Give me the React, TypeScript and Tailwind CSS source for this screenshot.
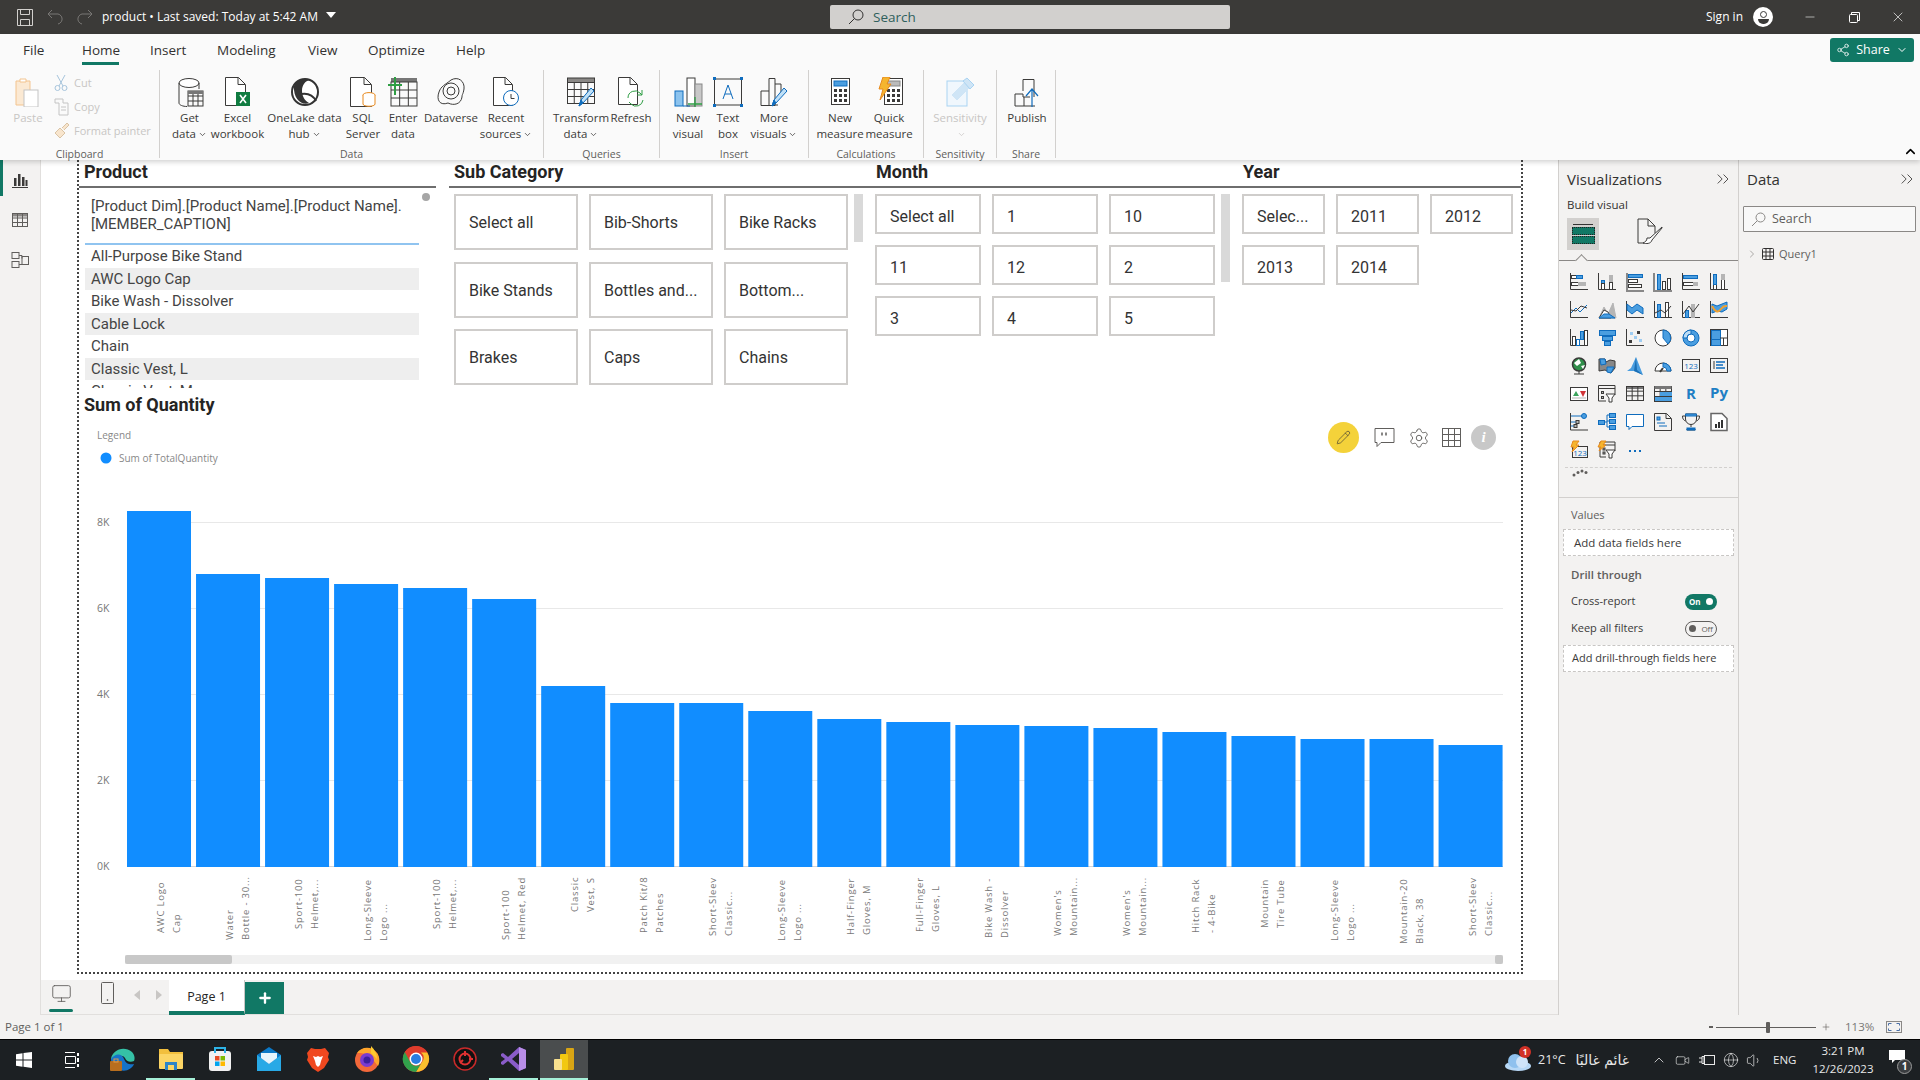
import React from "react";
import { ChevronDown, ChevronRight, ChevronUp, ChevronsRight, Search, X, Minus, Globe, Volume1, Video, Settings, Pencil, Share2, Monitor, Plus } from "lucide-react";

const D = "#3b3a39", B = "#4a9ee0", L = "#0f6cbd", G = "#b5b5b5", O = "#e8891c";

const Ic = ({ s = 30, v = 30, children }: { s?: number; v?: number; children: React.ReactNode }) => (
  <svg width={s} height={s} viewBox={`0 0 ${v} ${v}`} fill="none" stroke={D} strokeWidth={1}>{children}</svg>
);

const Grid = ({ x, y, w, h, cols = 3, rows = 3, c = D }: { x: number; y: number; w: number; h: number; cols?: number; rows?: number; c?: string }) => {
  const p = [];
  for (let i = 1; i < cols; i++) p.push(`M${x + (w * i) / cols} ${y}v${h}`);
  for (let i = 1; i < rows; i++) p.push(`M${x} ${y + (h * i) / rows}h${w}`);
  return <g stroke={c}><rect x={x} y={y} width={w} height={h} /><path d={p.join("")} /></g>;
};
const Pg = ({ x = 5, y = 1, w = 17, h = 27, c = D }: { x?: number; y?: number; w?: number; h?: number; c?: string }) => (
  <path d={`M${x + .5} ${y + .5}h${w - 7}l7 7v${h - 7}h-${w}zM${x + w - 7} ${y + .5}v7h7`} stroke={c} fill="#fff" />
);
const Pen = () => <g><path d="M13 29l2-6L25 11l3 3L17 26z" fill="#bfe0f7" stroke={L} /><path d="M13 29l2-6 2 3z" fill={L} stroke={L} /></g>;
const Calc = ({ x, disp }: { x: number; disp: string }) => (
  <g><rect x={x + .5} y="1.5" width="18" height="26" fill="#fff" />
    <rect x={x + 3} y="4" width="13" height="5" fill={disp} stroke={disp === B ? L : "#888"} />
    {[12, 17, 22].map(y => [3, 8, 13].map(dx => <rect key={y * 100 + dx} x={x + dx} y={y} width="3" height="3" fill={D} stroke="none" />))}</g>
);

const ribbonIcons: Record<string, React.ReactNode> = {
  paste: <Ic><path d="M3 4h14v24H3z" fill="#fbe9d3" stroke="#f3c48f" /><path d="M7 5V2h6v3z" fill="#fff" stroke="#f3c48f" /><rect x="11" y="13" width="14" height="17" fill="#fff" stroke="#c4c4c4" /></Ic>,
  get: <Ic><ellipse cx="14" cy="6" rx="10" ry="4.5" fill="#fff" /><path d="M4 6v20c0 2 4 3.5 8 3.5M24 6v6" /><Grid x={13} y={14} w={15} h={15} cols={3} rows={3} /><rect x="13" y="14" width="15" height="3" fill="#777" stroke="none" /></Ic>,
  excel: <Ic><Pg x={2} y={0} w={20} h={28} /><rect x="13" y="15" width="14" height="14" fill="#107c41" stroke="none" /><path d="M17 18l6 8M23 18l-6 8" stroke="#fff" strokeWidth="1.6" /></Ic>,
  lake: <Ic><circle cx="15" cy="15" r="13" fill="#fff" stroke="#333" strokeWidth="2" /><path d="M4 9c3-6 11-9 16-6-5 1-8 5-8 11 0 5 3 10 7 12-7 3-16-4-15-17z" fill="#333" stroke="none" /><path d="M11 17c6-1 12 1 15 7" stroke="#333" strokeWidth="2" /></Ic>,
  sql: <Ic><Pg x={2} y={0} w={21} h={29} /><ellipse cx="21" cy="18" rx="6" ry="2.4" fill="#fff" stroke={O} /><path d="M15 18v9c0 3 12 3 12 0v-9" fill="#fff" stroke={O} /></Ic>,
  enter: <Ic><rect x="3" y="1" width="26" height="4" fill="#777" stroke="none" /><Grid x={3} y={5} w={26} h={24} cols={3} rows={3} /><path d="M7 0v18M0 8h14" stroke="#2f9e44" strokeWidth="2" /></Ic>,
  dv: <Ic><path d="M15 3c7-4 14 1 13 9-1 6-2 5-2 8-1 7-8 9-14 6C4 29 0 23 3 15 5 9 9 8 15 3z" /><circle cx="15" cy="14" r="8" /><circle cx="15" cy="14" r="4" /></Ic>,
  recent: <Ic><Pg x={2} y={0} w={19} h={28} /><circle cx="20" cy="21" r="7.5" fill="#fff" stroke={L} /><path d="M20 17v4.500h3.500" /></Ic>,
  transform: <Ic><rect x="1.500" y="1" width="27" height="4.500" fill="#8a8886" stroke={D} /><Grid x={1.5} y={5.5} w={27} h={21} cols={4} rows={3} /><Pen /></Ic>,
  refresh: <Ic><Pg x={2} y={0} w={19} h={27} /><path d="M12 21a7 7 0 0 1 12-5l2 2M27 23a7 7 0 0 1-12 4l-2-2" stroke="#2f9e44" fill="none" /><path d="M26 13v5h-5" stroke="#2f9e44" /></Ic>,
  newv: <Ic><rect x="14" y="1" width="8" height="28" fill="#fff" /><rect x="22" y="7" width="7" height="22" fill="#c8c8c8" stroke="#888" /><rect x="2" y="14" width="8" height="15" fill="#8cc3ee" stroke={L} /><path d="M10 29h7" stroke={L} /><path d="M22 20v13M15 27h14" stroke="#2f9e44" strokeWidth="1.300" /></Ic>,
  text: <Ic><rect x="1.500" y="2" width="27" height="26" /><g fill={L} stroke="none"><rect x="0" y="0" width="3" height="3" /><rect x="27" y="0" width="3" height="3" /><rect x="0" y="27" width="3" height="3" /><rect x="27" y="27" width="3" height="3" /></g><path d="M10 22l5-14 5 14M12 17h6" stroke={L} /></Ic>,
  more: <Ic><path d="M10 1.500h6v27H2V14h8zM10 14v14M16 7h6v11" /><path d="M16 28h3" /><Pen /></Ic>,
  newm: <Ic><Calc x={6} disp={B} /></Ic>,
  quick: <Ic><Calc x={10} disp="#bbb" /><path d="M9 0h7l-3 7h4L6 23l3-11H5z" fill="#f5b52e" stroke={O} /></Ic>,
  sens: <Ic><rect x="2" y="4" width="20" height="25" stroke="#a9d3f2" fill="#f0f7fd" /><path d="M7 18l12-12 5 5-12 12z" fill="#cfe5f6" stroke="#cfe5f6" /><path d="M18 4l4-3 7 7-4 4z" fill="#cfe5f6" stroke="#a9d3f2" /></Ic>,
  pub: <Ic><path d="M11 14V2.500h11V20M3 29V17h8v3h7M3 29h20M12 29V20" /><path d="M20 30V12M14 19l6-7 6 7" stroke={L} strokeWidth="1.200" /></Ic>,
};

const Tool = ({ w, icon, lines, drop, dim }: { w: string; icon: string; lines: string[]; drop?: boolean; dim?: boolean }) => (
  <div className={`${w} flex flex-col items-center pt-[7px] shrink-0`}>
    <div className="h-[30px]">{ribbonIcons[icon]}</div>
    <div className={`mt-[3px] text-center text-[11.500px] leading-[16px] whitespace-nowrap ${dim ? "text-[#c8c6c4]" : "text-[#3b3a39]"}`}>
      {lines.map((l, i) => (
        <div key={i} className="flex items-center justify-center h-[16px]">
          {l}{drop && i === lines.length - 1 && <ChevronDown size={9} strokeWidth={2} className="ml-[2px]" />}
        </div>
      ))}
    </div>
  </div>
);

const Group = ({ w, label, children, pad }: { w: string; label: string; children: React.ReactNode; pad: string }) => (
  <div className={`${w} h-[88px] relative border-r border-[#d2d0ce] shrink-0`}>
    <div className={`flex ${pad}`}>{children}</div>
    <div className="absolute bottom-[-3px] inset-x-0 text-center text-[10.500px] leading-[14px] text-[#605e5c]">{label}</div>
  </div>
);

const Ribbon = () => (
  <div className="h-[126px] bg-[#fafafa] shadow-[0_2px_5px_rgba(0,0,0,0.18)] relative z-10">
    <div className="h-[36px] flex pl-[23px] text-[13.500px] text-[#323130] relative">
      <div className="w-[59px] pt-[6px]">File</div>
      <div className="w-[68px] pt-[6px] font-medium relative">Home<div className="absolute left-0 top-[28px] h-[3px] w-[37px] bg-[#117865]" /></div>
      <div className="w-[67px] pt-[6px]">Insert</div>
      <div className="w-[91px] pt-[6px]">Modeling</div>
      <div className="w-[60px] pt-[6px]">View</div>
      <div className="w-[88px] pt-[6px]">Optimize</div>
      <div className="pt-[6px]">Help</div>
      <div className="ml-auto mr-[6px] mt-[4px] w-[84px] h-[24px] rounded-[3px] bg-[#117865] text-white text-[12.500px] flex items-center justify-center gap-[6px]">
        <Share2 size={14} strokeWidth={1.300} />Share<ChevronDown size={12} />
      </div>
    </div>
    <div className="flex h-[90px]">
      <Group w="w-[160px]" label="Clipboard" pad="">
        <Tool w="w-[50px] ml-[3px]" icon="paste" lines={["Paste"]} dim />
        <div className="text-[11px] text-[#c8c6c4] pt-[1px] leading-[24px] ml-[1px]">
          <div className="flex items-center gap-[6px]"><svg width="14" height="18" viewBox="0 0 14 18" fill="none" stroke="#a6c4dc"><path d="M3 1l6 11M11 1L5 12" /><circle cx="3.500" cy="14" r="2.500" /><circle cx="10.500" cy="14" r="2.500" /></svg>Cut</div>
          <div className="flex items-center gap-[4px]"><svg width="16" height="18" viewBox="0 0 16 18" fill="none" stroke="#c4c4c4"><path d="M1 1h8v4h5v12H5V5H1z" /><path d="M7 9h5M7 12h5" /></svg>Copy</div>
          <div className="flex items-center gap-[4px]"><svg width="16" height="18" viewBox="0 0 16 18" fill="none" stroke="#d9c3a5"><path d="M1 11l5-5 5 5-5 5zM8 6l5-5 2 2-5 5" fill="#f8e5cd" /></svg>Format painter</div>
        </div>
      </Group>
      <Group w="w-[384px]" label="Data" pad="pl-[6px]">
        <Tool w="w-[47px]" icon="get" lines={["Get", "data"]} drop />
        <Tool w="w-[49px]" icon="excel" lines={["Excel", "workbook"]} />
        <Tool w="w-[85px]" icon="lake" lines={["OneLake data", "hub"]} drop />
        <Tool w="w-[32px]" icon="sql" lines={["SQL", "Server"]} />
        <Tool w="w-[48px]" icon="enter" lines={["Enter", "data"]} />
        <Tool w="w-[48px]" icon="dv" lines={["Dataverse"]} />
        <Tool w="w-[62px]" icon="recent" lines={["Recent", "sources"]} drop />
      </Group>
      <Group w="w-[116px]" label="Queries" pad="pl-[6px]">
        <Tool w="w-[62px]" icon="transform" lines={["Transform", "data"]} drop />
        <Tool w="w-[38px]" icon="refresh" lines={["Refresh"]} />
      </Group>
      <Group w="w-[149px]" label="Insert" pad="pl-[6px]">
        <Tool w="w-[44px]" icon="newv" lines={["New", "visual"]} />
        <Tool w="w-[36px]" icon="text" lines={["Text", "box"]} />
        <Tool w="w-[56px]" icon="more" lines={["More", "visuals"]} drop />
      </Group>
      <Group w="w-[115px]" label="Calculations" pad="pl-[6px]">
        <Tool w="w-[50px]" icon="newm" lines={["New", "measure"]} />
        <Tool w="w-[48px]" icon="quick" lines={["Quick", "measure"]} />
      </Group>
      <Group w="w-[73px]" label="Sensitivity" pad="">
        <Tool w="w-[72px]" icon="sens" lines={["Sensitivity", ""]} drop dim />
      </Group>
      <Group w="w-[59px]" label="Share" pad="">
        <Tool w="w-[60px]" icon="pub" lines={["Publish"]} />
      </Group>
      <div className="ml-auto mr-[2px] mt-[74px]"><ChevronUp size={15} strokeWidth={2.500} /></div>
    </div>
  </div>
);

const TitleBar = () => (
  <div className="h-[34px] bg-[#3b3a38] flex items-center text-white shrink-0">
    <div className="w-[830px] flex items-center pl-[17px]">
      <svg width="16" height="17" viewBox="0 0 16 17" fill="none" stroke="#d2d0ce"><path d="M.500.500h15v16H.500z" /><path d="M3.500.500v5h9v-5M3.500 16.500v-6h9v6" /></svg>
      <svg className="ml-[14px]" width="16" height="16" viewBox="0 0 16 16" fill="none" stroke="#797775"><path d="M5 1L1 5l4 4M1 5h8a5 5 0 0 1 2 10" /></svg>
      <svg className="ml-[14px]" width="16" height="16" viewBox="0 0 16 16" fill="none" stroke="#797775"><path d="M11 1l4 4-4 4M15 5H7a5 5 0 0 0-2 10" /></svg>
      <div className="ml-[9px] text-[12px] whitespace-nowrap">product • Last saved: Today at 5:42 AM</div>
      <svg className="ml-[8px] mb-[4px]" width="10" height="6" viewBox="0 0 10 6"><path d="M0 0h10L5 6z" fill="#fff" /></svg>
    </div>
    <div className="w-[400px] h-[24px] bg-[#d2d0ce] rounded-[2px] flex items-center pl-[18px] text-[13.500px] text-[#2f5f5c]">
      <svg width="16" height="16" viewBox="0 0 16 16" fill="none" stroke="#323130"><circle cx="10" cy="6" r="5" /><path d="M6.500 9.500L1 15" /></svg>
      <span className="ml-[9px]">Search</span>
    </div>
    <div className="ml-auto flex items-center">
      <span className="text-[12px]">Sign in</span>
      <div className="ml-[10px] w-[20px] h-[20px] rounded-full bg-white flex flex-col items-center justify-center">
        <div className="w-[7px] h-[7px] rounded-full border border-[#3b3a38]" />
        <div className="mt-[1px] w-[11px] h-[5px] rounded-b-full bg-[#3b3a38]" />
      </div>
      <div className="w-[44px] ml-[15px] flex justify-center"><Minus size={14} strokeWidth={1} /></div>
      <div className="w-[44px] flex justify-center">
        <svg width="11" height="11" viewBox="0 0 11 11" fill="none" stroke="#fff"><rect x=".500" y="2.500" width="8" height="8" rx="1" /><path d="M2.500 2.500v-2h8v8h-2" /></svg>
      </div>
      <div className="w-[44px] flex justify-center"><X size={16} strokeWidth={1} /></div>
    </div>
  </div>
);

const Rail = () => (
  <div className="w-[41px] shrink-0 bg-[#f3f2f1] border-r border-[#e1dfdd] relative flex flex-col items-center gap-[22px] pt-[11px]">
    <div className="absolute left-0 top-0 w-[3px] h-[36px] bg-[#117865]" />
    <svg width="18" height="18" viewBox="0 0 18 18" fill={D} stroke="none"><path d="M1 16h16v1H1z" /><rect x="3" y="7" width="2.500" height="8" /><rect x="7" y="3" width="2.500" height="12" /><rect x="11" y="6" width="2.500" height="9" /><rect x="14.500" y="9" width="2" height="6" /></svg>
    <svg width="18" height="18" viewBox="0 0 18 18"><rect x="1" y="2" width="16" height="3.500" fill="#8a8886" /><g fill="none" stroke="#605e5c"><rect x="1.500" y="2.500" width="15" height="13" /><path d="M6.500 2.500v13M11.500 2.500v13M1.500 7h15M1.500 11.500h15" /></g></svg>
    <svg width="18" height="18" viewBox="0 0 18 18" fill="none" stroke="#605e5c"><rect x="1" y="1.500" width="7" height="6" /><rect x="1" y="10.500" width="7" height="6" /><rect x="11" y="5.500" width="6.500" height="8" /><path d="M8 4.500h3v3M8 13.500h3" /></svg>
  </div>
);

const Head = ({ children, x }: { children: React.ReactNode; x: string }) => (
  <div className={`h-[28px] border-b-2 border-[#6e6e6e] text-[18px] leading-[24px] font-bold text-[#252423] ${x}`}>{children}</div>
);

const Chip = ({ t, h, w, pt }: { t: string; h: string; w: string; pt: string }) => (
  <div className={`${h} ${w} ${pt} border-2 border-[#cfcdcb] flex items-center pl-[13px] text-[16px] text-[#333] whitespace-nowrap overflow-hidden`}>{t}</div>
);

const Slicers = () => (
  <div className="h-[228px] flex font-['Roboto',sans-serif] shrink-0">
    <div className="w-[357px]">
      <Head x="pl-[5px]">Product</Head>
      <div className="relative pl-[6px] text-[15px] text-[#444]">
        <div className="absolute right-[6px] top-[5px] w-[8px] h-[8px] rounded-full bg-[#a6a6a6]" />
        <div className="w-[334px] h-[57px] border-b-2 border-[#90c4f0] pl-[6px] pt-[9px] leading-[18px]">[Product Dim].[Product Name].[Product Name].<br />[MEMBER_CAPTION]</div>
        <div className="w-[334px] h-[143px] overflow-hidden leading-[22.500px]">
          {["All-Purpose Bike Stand", "AWC Logo Cap", "Bike Wash - Dissolver", "Cable Lock", "Chain", "Classic Vest, L", "Classic Vest, M"].map((t, i) => (
            <div key={t} className={`h-[22.500px] pl-[6px] ${i % 2 ? "bg-[#eeeeee]" : "bg-white"}`}>{t}</div>
          ))}
        </div>
      </div>
    </div>
    <div className="w-[13px]" />
    <div className="w-[420px]">
      <Head x="pl-[5px]">Sub Category</Head>
      <div className="flex pl-[5px] pt-[6px]">
        <div className="grid grid-cols-[124px_124px_124px] gap-x-[11px] gap-y-[11.500px]">
          {["Select all", "Bib-Shorts", "Bike Racks", "Bike Stands", "Bottles and...", "Bottom...", "Brakes", "Caps", "Chains"].map(t => <Chip key={t} t={t} h="h-[56px]" w="w-[124px]" pt="pt-[2px]" />)}
        </div>
        <div className="ml-[6px] w-[9px] h-[48px] bg-[#d9d9d9]" />
      </div>
    </div>
    <div className="w-[367px]">
      <Head x="pl-[7px]">Month</Head>
      <div className="flex pl-[6px] pt-[6px]">
        <div className="grid grid-cols-[106px_106px_106px] gap-x-[11px] gap-y-[11px] h-[141px]">
          {["Select all", "1", "10", "11", "12", "2", "3", "4", "5"].map(t => <Chip key={t} t={t} h="h-[40px]" w="w-[106px]" pt="pt-[6px]" />)}
        </div>
        <div className="ml-[6px] w-[9px] h-[88px] bg-[#d9d9d9]" />
      </div>
    </div>
    <div className="w-[285px]">
      <Head x="pl-[7px]">Year</Head>
      <div className="pl-[6px] pt-[6px]">
        <div className="grid grid-cols-[83px_83px_83px] gap-x-[11px] gap-y-[11px]">
          {["Selec...", "2011", "2012", "2013", "2014"].map(t => <Chip key={t} t={t} h="h-[40px]" w="w-[83px]" pt="pt-[6px]" />)}
        </div>
      </div>
    </div>
  </div>
);

const data: { top: number; low: number; a: string; b: string }[] = [
  { top: 511, low: 933, a: "AWC Logo", b: "Cap" },
  { top: 574, low: 940, a: "Water", b: "Bottle - 30..." },
  { top: 578, low: 929, a: "Sport-100", b: "Helmet,..." },
  { top: 584, low: 941, a: "Long-Sleeve", b: "Logo ..." },
  { top: 588, low: 929, a: "Sport-100", b: "Helmet,..." },
  { top: 599, low: 940, a: "Sport-100", b: "Helmet, Red" },
  { top: 686, low: 912, a: "Classic", b: "Vest, S" },
  { top: 703, low: 933, a: "Patch Kit/8", b: "Patches" },
  { top: 703, low: 936, a: "Short-Sleev", b: "Classic..." },
  { top: 711, low: 941, a: "Long-Sleeve", b: "Logo ..." },
  { top: 719, low: 935, a: "Half-Finger", b: "Gloves, M" },
  { top: 722, low: 932, a: "Full-Finger", b: "Gloves, L" },
  { top: 725, low: 938, a: "Bike Wash -", b: "Dissolver" },
  { top: 726, low: 936, a: "Women's", b: "Mountain..." },
  { top: 728, low: 936, a: "Women's", b: "Mountain..." },
  { top: 732, low: 933, a: "Hitch Rack", b: "- 4-Bike" },
  { top: 736, low: 928, a: "Mountain", b: "Tire Tube" },
  { top: 739, low: 941, a: "Long-Sleeve", b: "Logo ..." },
  { top: 739, low: 944, a: "Mountain-20", b: "Black, 38" },
  { top: 745, low: 936, a: "Short-Sleev", b: "Classic..." },
];

const Chart = () => (
  <svg width="1442" height="552" viewBox="79 420 1442 552" className="block" fontFamily="'Open Sans',sans-serif">
    <text x="97" y="439" fontSize="10" fill="#888">Legend</text>
    <circle cx="106" cy="458" r="5.500" fill="#118dff" />
    <text x="119" y="462" fontSize="10" fill="#888">Sum of TotalQuantity</text>
    {[["8K", 522], ["6K", 608], ["4K", 694], ["2K", 780], ["0K", 866]].map(([t, y]) => (
      <g key={t as string}>
        <text x="97" y={(y as number) + 4} fontSize="10.500" fill="#777">{t}</text>
        <path d={`M127 ${y}.5H1503`} stroke={t === "0K" ? "#d5d5d5" : "#e8e8e8"} />
      </g>
    ))}
    {data.map((d, i) => {
      const cx = 159 + 69.03 * i;
      return (
        <g key={i}>
          <rect x={cx - 32} y={d.top} width="64" height={867 - d.top} fill="#118dff" />
          <text transform={`translate(${cx + 5} ${d.low}) rotate(-90)`} fontSize="9.500" letterSpacing=".8" fill="#777">{d.a}</text>
          <text transform={`translate(${cx + 21} ${d.low}) rotate(-90)`} fontSize="9.500" letterSpacing=".8" fill="#777">{d.b}</text>
        </g>
      );
    })}
    <rect x="125" y="955" width="1378" height="9" fill="#f1f1f1" />
    <rect x="125" y="955" width="107" height="9" rx="2" fill="#c8c8c8" />
    <rect x="1495" y="955" width="8" height="9" rx="2" fill="#c8c8c8" />
  </svg>
);

const Report = () => (
  <div className="ml-[36px] w-[1446px] h-[814px] border-x-2 border-b-2 border-dotted border-[#444] flex flex-col relative">
    <Slicers />
    <div className="h-[32px] pl-[5px] pt-[3px] text-[18px] leading-[28px] font-bold text-[#252423] font-['Roboto',sans-serif] shrink-0">Sum of Quantity</div>
    <Chart />
    <div className="absolute left-[1249px] top-[262px] flex items-center text-[#605e5c]">
      <div className="w-[31px] h-[31px] rounded-full bg-[#f4d23a] flex items-center justify-center"><Pencil size={15} strokeWidth={1} color="#333" /></div>
      <svg className="ml-[15px]" width="21" height="21" viewBox="0 0 21 21" fill="none" stroke="#605e5c"><path d="M1 1.500h19v14H7l-4 4v-4H1z" /><path d="M8 5.500v3M12 5.500v3" strokeWidth="1.500" /></svg>
      <Settings className="ml-[13px]" size={22} strokeWidth={1} />
      <svg className="ml-[12px]" width="19" height="19" viewBox="0 0 19 19" fill="none" stroke="#605e5c"><rect x=".500" y=".500" width="18" height="18" /><path d="M6.500.500v18M12.500.500v18M.500 6.500h18M.500 12.500h18" /></svg>
      <div className="ml-[10px] w-[25px] h-[25px] rounded-full bg-[#c8c8c8] flex items-center justify-center text-white font-bold italic text-[15px] font-['Liberation_Serif',serif]">i</div>
    </div>
  </div>
);

const Tabs = () => (
  <div className="h-[35px] bg-[#f3f2f1] flex items-start shrink-0 border-b border-[#e1dfdd]">
    <div className="w-[42px] flex flex-col items-center pt-[3px] ml-[-1px] text-[#605e5c]">
      <Monitor size={21} strokeWidth={1} />
      <div className="w-[24px] h-[3px] rounded bg-[#117865] mt-[5px]" />
    </div>
    <div className="w-[50px] flex justify-center pt-[2px]">
      <svg width="13" height="22" viewBox="0 0 13 22" fill="none" stroke="#605e5c"><rect x=".500" y=".500" width="12" height="21" rx="1" /><circle cx="6.500" cy="18" r=".5" /></svg>
    </div>
    <div className="flex items-center gap-[16px] h-[30px] ml-[2px] w-[34px]">
      <svg width="6" height="10" viewBox="0 0 6 10"><path d="M6 0v10L0 5z" fill="#c8c6c4" /></svg>
      <svg width="6" height="10" viewBox="0 0 6 10"><path d="M0 0v10l6-5z" fill="#c8c6c4" /></svg>
    </div>
    <div className="ml-[1px] w-[76px] h-[35px] bg-white border-b-4 border-[#117865] border-r border-r-[#c8c6c4] flex items-center justify-center pt-[3px] text-[12.500px] text-[#252423]">Page 1</div>
    <div className="mt-[2px] w-[39px] h-[32px] bg-[#117865] flex items-center justify-center"><Plus size={16} strokeWidth={3.500} color="#fff" /></div>
  </div>
);

const VI = ({ children }: { children: React.ReactNode }) => (
  <svg width="18" height="18" viewBox="0 0 18 18" fill="none" stroke={D} strokeWidth="1" overflow="visible">{children}</svg>
);
const Ax = () => <path d="M.500 0v16.500H18" />;
const Bx = ({ x, y, w, h, f = B, s = L }: { x: number; y: number; w: number; h: number; f?: string; s?: string }) => <rect x={x + .5} y={y + .5} width={w} height={h} fill={f} stroke={s} />;

const vizIcons: React.ReactNode[] = [
  <><Ax /><Bx x={1} y={2} w={8} h={3} f="#fff" s={D} /><Bx x={6} y={2} w={6} h={3} /><Bx x={1} y={9} w={9} h={3} f="#fff" s={D} /><Bx x={8} y={9} w={7} h={3} f={G} s={G} /></>,
  <><Ax /><Bx x={3} y={7} w={3} h={9} /><Bx x={3} y={10} w={3} h={6} f="#fff" s={D} /><Bx x={11} y={2} w={3} h={14} f={G} s={G} /><Bx x={11} y={9} w={3} h={7} f="#fff" s={D} /></>,
  <><path d="M1 0v18h17" stroke="#888" strokeWidth="2" /><Bx x={2} y={1} w={14} h={3} /><Bx x={2} y={6} w={9} h={3} f="#fff" s={D} /><Bx x={2} y={11} w={13} h={3} f="#fff" s={D} /></>,
  <><path d="M0 0v18h18" stroke="#888" strokeWidth="2" /><Bx x={3} y={1} w={3} h={15} /><Bx x={8} y={8} w={3} h={8} f="#fff" s={D} /><Bx x={13} y={5} w={3} h={11} f="#fff" s={D} /></>,
  <><Ax /><Bx x={1} y={2} w={14} h={3} /><Bx x={1} y={9} w={10} h={3} f="#fff" s={D} /><Bx x={11} y={9} w={4} h={3} f={G} s={G} /></>,
  <><Ax /><Bx x={3} y={1} w={3} h={15} f="#fff" s={D} /><Bx x={3} y={1} w={3} h={10} /><Bx x={11} y={1} w={3} h={15} f="#fff" s={D} /><Bx x={11} y={1} w={3} h={5} f={G} s={G} /></>,
  <><Ax /><path d="M1 12l5-5 4 4 7-7" stroke={L} /><path d="M1 9l5 1 5-5 6 2" /></>,
  <><path d="M1 17l5-11 4 7 5-11 3 15z" fill={G} stroke={G} /><path d="M1 17l5-8 4 2 3 6z" fill="#fff" /><path d="M1 17l5-4 5 0 6 4z" fill={B} stroke={L} /></>,
  <><Ax /><path d="M1 3l5 4 5-4 6 4v6l-6-4-5 4-5-4z" fill={B} stroke={L} /></>,
  <><Ax /><Bx x={3} y={3} w={3} h={13} /><Bx x={11} y={1} w={3} h={15} f="#fff" s={D} /><path d="M1 12l6-3 4 3 6-7" /></>,
  <><Ax /><Bx x={3} y={9} w={3} h={7} /><Bx x={9} y={3} w={3} h={13} f={G} s={G} /><path d="M1 13l6-8 4 6 6-8" /></>,
  <><Ax /><path d="M2 3l5 2 5-2 5-2v7l-5 3-5-1-5 2z" fill={B} stroke={L} /><path d="M2 5c3 6 6 7 9 3s4-3 6-3" stroke="#f0a030" strokeWidth="2" /></>,
  <><Ax /><Bx x={2} y={7} w={3} h={9} f="#fff" s={D} /><Bx x={6} y={10} w={3} h={6} f="#fff" s={L} /><Bx x={10} y={2} w={3} h={8} /><Bx x={14} y={1} w={3} h={15} f="#fff" s={D} /></>,
  <><Bx x={1} y={1} w={16} h={5} /><Bx x={4} y={7} w={10} h={4} /><Bx x={6} y={12} w={6} h={4} /></>,
  <><Ax /><g stroke="none"><rect x="4" y="3" width="3" height="3" fill="#9fcdf2" /><rect x="11" y="2" width="3" height="3" fill={D} /><rect x="8" y="7" width="3" height="3" fill="#9fcdf2" /><rect x="3" y="11" width="3" height="3" fill={D} /><rect x="13" y="10" width="3" height="3" fill="#9fcdf2" /></g></>,
  <><circle cx="9" cy="9" r="8" fill="#fff" /><path d="M9 1a8 8 0 0 1 5 14L9 9z" fill={B} stroke={L} /></>,
  <><circle cx="9" cy="9" r="8" fill={B} stroke={L} /><circle cx="9" cy="9" r="4" fill="#fff" stroke={L} /><path d="M9 1a8 8 0 0 0-8 8h4a4 4 0 0 1 4-4z" fill="#bcdcf5" stroke={L} /></>,
  <><rect x=".500" y=".500" width="17" height="16" fill="#fff" /><Bx x={1} y={1} w={9} h={9} /><Bx x={1} y={10} w={9} h={6} /><path d="M10 9h7M13.500 9v8" /></>,
  <><circle cx="9" cy="7.500" r="6.500" fill="#2f8f4a" stroke={D} strokeWidth="1.500" /><path d="M4 6l5-4 2 4-4 3zM11 9l4-1-2 4z" fill="#fff" stroke="none" /><path d="M9 14v3M4 17h10" /></>,
  <><path d="M1 2l6 0 1 3 4-2 5 1 0 7-4 5-6-3-6 1z" fill="#888" stroke={D} /><path d="M2 2h5l1 5-5 1z" fill={B} stroke={L} /><path d="M9 10h7l-3 6-4-1z" fill={B} stroke={L} /></>,
  <><path d="M10 0L5 11 1 14l7 0 9 4z" fill={B} stroke="none" /><path d="M10 0l1 13 6 5-9-4z" fill="#1b6fb5" stroke="none" /></>,
  <><path d="M1 14a8 8 0 0 1 16 0z" fill="#fff" /><path d="M9 6a8 8 0 0 1 8 8h-4a4 4 0 0 0-4-4z" fill={B} stroke={L} /><path d="M6 15l3-4" strokeWidth="2" /></>,
  <><rect x=".500" y="2.500" width="17" height="12" /><text x="9" y="12" fontSize="8" textAnchor="middle" fill={L} stroke="none" fontFamily="'Open Sans',sans-serif">123</text></>,
  <><rect x=".500" y="1.500" width="17" height="14" /><path d="M4 4v8" /><path d="M6 5h9M6 8h7M6 11h9" stroke={L} strokeWidth="1.500" /></>,
  <><rect x=".500" y="2.500" width="17" height="13" fill="#fff" /><path d="M3 11l3-5 3 5z" fill="#3aa35c" stroke="none" /><path d="M10 6h6l-3 6z" fill="#d13438" stroke="none" /><path d="M2 13h14" stroke={G} /></>,
  <><path d="M17 10V.500H.500V16H8M.500 3.500H17" /><Bx x={3} y={6} w={2} h={2} f={G} s={D} /><Bx x={3} y={11} w={2} h={2} f={G} s={D} /><path d="M8 9h9l-3 4v4h-3v-4z" fill="#fff" /></>,
  <><rect x=".500" y="1" width="17" height="3" fill="#777" stroke="none" /><Grid x={0.5} y={1.5} w={17} h={14} cols={3} rows={3} /></>,
  <><Grid x={0.5} y={1.5} w={17} h={15} cols={3} rows={3} /><rect x=".500" y="1" width="17" height="3" fill="#777" stroke="none" /><g fill={B} stroke="none"><rect x="6" y="7" width="12" height="4" /><rect x="1" y="12" width="17" height="4" /></g></>,
  <text x="9" y="14" fontSize="15" fontWeight="700" textAnchor="middle" fill="#1f7fc4" stroke="none" fontFamily="'Open Sans',sans-serif">R</text>,
  <text x="9" y="13" fontSize="15" fontWeight="700" textAnchor="middle" fill="#1f7fc4" stroke="none" fontFamily="'Open Sans',sans-serif">Py</text>,
  <><path d="M.500 0v17H18" /><path d="M1 3h11M1 9h7M1 13h4" stroke={L} /><circle cx="14" cy="3" r="2.500" fill={B} stroke={L} /><rect x="6" y="7.500" width="3" height="3" fill={G} stroke={D} /><rect x="4" y="11.500" width="3" height="3" fill={G} stroke={D} /></>,
  <><Bx x={0} y={7} w={6} h={4} /><Bx x={11} y={0} w={6} h={4} /><Bx x={11} y={6} w={6} h={4} /><Bx x={11} y={12} w={6} h={4} /><path d="M6 9h3M9 2v12M9 2h2M9 8h2M9 14h2" stroke={L} /></>,
  <path d="M.500 1.500h17v12H6l-3 3v-3H.500z" stroke={L} fill="#fff" />,
  <><path d="M.500.500h12l5 5v12H.500zM12 .500v5h5" /><rect x="3" y="4" width="3" height="3" fill={B} stroke={L} /><path d="M3 10h8M5 13h8" stroke={L} /></>,
  <><path d="M3.500 1h11v5a5.500 5.500 0 0 1-11 0zM9 11v3M5 16h8v1H5z" /><path d="M3.500 1h11v2h-11z" fill={B} stroke={L} /><path d="M3.500 3H.500c0 3 1 4 3 5M14.500 3h3c0 3-1 4-3 5" /><rect x="5" y="15" width="8" height="2" fill={L} stroke={L} /></>,
  <><path d="M1 .500h11l5 5v12H1z" fill="#fff" stroke="#666" strokeWidth="1.500" /><g fill="#333" stroke="none"><rect x="5" y="11" width="2" height="4" /><rect x="8" y="9" width="2" height="6" /><rect x="11" y="7" width="2" height="8" /></g></>,
  <><rect x="2.500" y="5.500" width="15" height="11" /><text x="10" y="14.500" fontSize="8" textAnchor="middle" fill={L} stroke="none" fontFamily="'Open Sans',sans-serif">123</text><path d="M3 0h6L6 4h3L2 11l2-5H1z" fill="#f5b52e" stroke={O} /></>,
  <><path d="M17 10V1H2v15h6M2 4h15" /><rect x="5" y="7" width="2" height="2" fill={G} stroke={D} /><rect x="5" y="11" width="2" height="2" fill={G} stroke={D} /><path d="M8 9h9l-3 4v4h-3v-4z" fill="#fff" /><path d="M3 0h5L5 4h3L1 10l2-4H0z" fill="#f5b52e" stroke={O} /></>,
  <g fill={L} stroke="none"><rect x="3" y="9" width="2" height="2" /><rect x="8" y="9" width="2" height="2" /><rect x="13" y="9" width="2" height="2" /></g>,
];

const Toggle = ({ on }: { on?: boolean }) => on ? (
  <div className="w-[32px] h-[16px] rounded-full bg-[#117865] flex items-center justify-between px-[4px] text-white text-[8px] font-bold"><span>On</span><span className="w-[7px] h-[7px] rounded-full bg-white" /></div>
) : (
  <div className="w-[32px] h-[16px] rounded-full border border-[#605e5c] flex items-center justify-between px-[3px] text-[#605e5c] text-[8px]"><span className="w-[7px] h-[7px] rounded-full bg-[#605e5c]" /><span>Off</span></div>
);

const Viz = () => (
  <div className="w-[181px] shrink-0 bg-[#f3f2f1] border-r border-[#d2d0ce] border-l flex flex-col text-[#323130]">
    <div className="h-[37px] flex items-center pl-[8px] pr-[5px] justify-between pt-[1px]">
      <span className="text-[15px] font-medium">Visualizations</span><ChevronsRight size={20} strokeWidth={1} />
    </div>
    <div className="pl-[8px] text-[11.500px] font-medium leading-[16px] h-[21px]">Build visual</div>
    <div className="h-[43px] relative border-b border-[#8a8886] pl-[8px] flex items-start">
      <div className="w-[32px] h-[32px] bg-[#d2d0ce] flex flex-col items-center justify-center gap-[1px]">
        <div className="w-[20px] h-[1px] bg-[#333] mb-[1px]" />
        <div className="w-[23px] h-[8px] bg-[#117865] border border-dotted border-[#222]" />
        <div className="w-[23px] h-[8px] bg-[#117865] border border-dotted border-[#222]" />
      </div>
      <svg className="ml-[38px]" width="26" height="26" viewBox="0 0 26 26" fill="none" stroke={D}><path d="M1 25V1h10l7 7v7M11 1v7h7M1 25h6" /><path d="M25 9L13 20l-3 0c0 3-2 4-4 5 3 1 8 1 9-3L25 10z" fill="#fff" /></svg>
      <div className="absolute left-[18px] bottom-[-5px] w-[9px] h-[9px] rotate-45 bg-[#f3f2f1] border-l border-t border-[#8a8886]" />
    </div>
    <div className="grid grid-cols-[repeat(6,28px)] auto-rows-[28px] pl-[6px] pt-[7px] h-[206px] content-start items-center justify-items-center">
      {vizIcons.map((ic, i) => <VI key={i}>{ic}</VI>)}
    </div>
    <div className="mx-[6px] border-t border-dashed border-[#d2d0ce] h-[30px] pl-[7px] pt-[1px]">
      <svg width="16" height="8" viewBox="0 0 16 8" fill="#605e5c"><circle cx="2" cy="6" r="1.500" /><circle cx="6" cy="3.500" r="1.500" /><circle cx="10" cy="2" r="1.500" /><circle cx="14" cy="3.500" r="1.500" /></svg>
    </div>
    <div className="border-t border-[#d2d0ce] pt-[9px] text-[11px] text-[#3b3a39]">
      <div className="pl-[12px] h-[22px] text-[#605e5c]">Values</div>
      <div className="mx-[4px] h-[27px] bg-white border border-dashed border-[#c8c6c4] flex items-center pl-[10px] text-[11.500px]">Add data fields here</div>
      <div className="pl-[12px] pt-[10px] h-[32px] font-semibold text-[11.500px] text-[#605e5c]">Drill through</div>
      <div className="pl-[12px] pr-[21px] h-[27px] flex items-center justify-between"><span>Cross-report</span><Toggle on /></div>
      <div className="pl-[12px] pr-[21px] h-[27px] flex items-center justify-between"><span>Keep all filters</span><Toggle /></div>
      <div className="mx-[4px] mt-[3px] h-[27px] bg-white border border-dashed border-[#c8c6c4] flex items-center pl-[8px] text-[11px] whitespace-nowrap">Add drill-through fields here</div>
    </div>
  </div>
);

const DataPane = () => (
  <div className="w-[181px] shrink-0 bg-[#f3f2f1] text-[#323130]">
    <div className="h-[37px] flex items-center pl-[8px] pr-[3px] justify-between pt-[1px]">
      <span className="text-[15px] font-medium">Data</span><ChevronsRight size={20} strokeWidth={1} />
    </div>
    <div className="mx-[4px] mt-[9px] h-[26px] border border-[#8a8886] bg-[#f8f8f8] rounded-[1px] flex items-center pl-[7px] text-[12.500px] text-[#605e5c]">
      <svg width="15" height="15" viewBox="0 0 15 15" fill="none" stroke="#8a8886"><circle cx="9.500" cy="5.500" r="4.500" /><path d="M6 9l-5 5" /></svg>
      <span className="ml-[6px]">Search</span>
    </div>
    <div className="flex items-center mt-[14px] pl-[7px] text-[11px] text-[#605e5c]">
      <ChevronRight size={12} strokeWidth={1} />
      <svg className="ml-[4px]" width="12" height="12" viewBox="0 0 12 12" fill="none" stroke="#323130"><rect x=".500" y=".500" width="11" height="11" rx="1" /><path d="M4 .500v11M8 .500v11M.500 4h11M.500 8h11" /></svg>
      <span className="ml-[5px]">Query1</span>
    </div>
  </div>
);

const StatusBar = () => (
  <div className="h-[24px] bg-[#f3f2f1] flex items-center text-[11.500px] text-[#605e5c] pl-[5px] shrink-0">
    Page 1 of 1
    <div className="ml-auto flex items-center pr-[18px]">
      <span className="w-[4px] h-[2px] bg-[#605e5c]" />
      <div className="ml-[3px] w-[100px] h-[1px] bg-[#605e5c] relative"><div className="absolute left-[50px] top-[-5px] w-[4px] h-[11px] rounded-[1px] bg-[#605e5c]" /></div>
      <Plus className="ml-[5px]" size={10} strokeWidth={1.500} />
      <span className="ml-[14px] w-[32px] text-[#797775]">113%</span>
      <svg className="ml-[9px]" width="16" height="12" viewBox="0 0 16 12" fill="none" stroke="#605e5c"><rect x=".500" y=".500" width="15" height="11" stroke="#8a8886" /><path d="M2.500 4.500v-2h3M10.500 2.500h3v2M13.500 7.500v2h-3M5.500 9.500h-3v-2" stroke="#4a6fa5" /></svg>
    </div>
  </div>
);

const TI = ({ children }: { children: React.ReactNode }) => <svg width="28" height="28" viewBox="0 0 28 28" fill="none">{children}</svg>;
const Slot = ({ children, on }: { children: React.ReactNode; on?: boolean }) => (
  <div className={`w-[49px] h-[40px] flex items-center justify-center border-b-[2px] ${on ? "border-[#a6f0d8]" : "border-transparent"}`}>{children}</div>
);

const Taskbar = () => (
  <div className="h-[41px] bg-[#1c2023] border-t border-black flex items-center text-white shrink-0">
    <div className="w-[48px] flex justify-center">
      <svg width="16" height="16" viewBox="0 0 16 16" fill="#fff"><path d="M0 2.300l6.500-1v6.300H0zM7.500 1.100L16 0v7.600H7.500zM0 8.500h6.500v6.300L0 13.800zM7.500 8.500H16V16l-8.500-1.200z" /></svg>
    </div>
    <div className="w-[49px] flex justify-center">
      <svg width="16" height="16" viewBox="0 0 16 16" fill="none" stroke="#fff"><path d="M0 .500h10M0 15.500h10M.500 4.500h10v7H.500z" /><path d="M13 1v3M13 6v4M13 12v3" strokeWidth="2" /></svg>
    </div>
    <Slot><TI><path d="M3 14C4 5 16 0 24 7c3 3 3 7 2 9-4 2-8 0-9-3-2-3-7-3-10 1z" fill="#35c1a6" /><path d="M16 14c2 5 6 6 10 5-2 5-8 8-14 6C6 23 3 19 3 14c4-6 11-6 13 0z" fill="#1573c9" /><rect x="2" y="16" width="12" height="10" rx="1" fill="#b86e1e" /><rect x="6" y="14" width="4" height="3" stroke="#d99a4e" /></TI></Slot>
    <Slot on><TI><path d="M2 4h9l2 3h13v9H2z" fill="#f2bf3d" /><rect x="2" y="9" width="24" height="15" rx="1" fill="#fcd565" /><rect x="8" y="17" width="12" height="8" fill="#2d84c8" /><rect x="11" y="20" width="6" height="5" fill="#fcd565" /></TI></Slot>
    <Slot><TI><rect x="3" y="6" width="22" height="20" rx="3" fill="#f1f1f1" /><path d="M9 8V3h10v5" stroke="#2db3e6" strokeWidth="2" /><rect x="9" y="11" width="4.500" height="4.500" fill="#e74c24" /><rect x="14.500" y="11" width="4.500" height="4.500" fill="#7fba00" /><rect x="9" y="16.500" width="4.500" height="4.500" fill="#00a4ef" /><rect x="14.500" y="16.500" width="4.500" height="4.500" fill="#ffb900" /></TI></Slot>
    <Slot><TI><path d="M14 2L26 10v16H2V10z" fill="#0a78c7" /><path d="M2 10l12 9 12-9v16H2z" fill="#28a9e6" /><path d="M6 8h16v5l-8 6-8-6z" fill="#e6f4fc" /></TI></Slot>
    <Slot><TI><path d="M7 3l4 1h6l4-1 4 5-1 4 1 3-5 8-6 4-6-4-5-8 1-3-1-4z" fill="#f0481f" /><path d="M9 11l3 1 2-1 2 1 3-1-2 5-1 4-2 2-2-2-1-4z" fill="#fff" /></TI></Slot>
    <Slot><TI><circle cx="14" cy="15" r="12" fill="#f3683a" /><path d="M4 8C8 2 18 0 24 8c3 4 3 10 1 13L16 10 8 8z" fill="#ffa52b" /><circle cx="14" cy="15" r="7" fill="#7a3bd1" /><circle cx="14" cy="15" r="3.500" fill="#3d1f9e" /><path d="M18 1c4 4 6 8 6 13l-6-6z" fill="#fdcb30" /></TI></Slot>
    <Slot><TI><circle cx="14" cy="14" r="13" fill="#de3c2c" /><path d="M14 1a13 13 0 0 1 11.300 6.500H14a6.500 6.500 0 0 0-6 4L2.800 7A13 13 0 0 1 14 1z" fill="#de3c2c" /><path d="M25.300 7.500A13 13 0 0 1 14 27l5.700-9.500a6.500 6.500 0 0 0-.7-10z" fill="#fbc02d" /><path d="M2.800 7A13 13 0 0 0 14 27l5.700-9.500a6.500 6.500 0 0 1-11.500-.5z" fill="#31a24c" /><circle cx="14" cy="14" r="6.500" fill="#fff" /><circle cx="14" cy="14" r="5" fill="#2a7de1" /></TI></Slot>
    <Slot><TI><circle cx="14" cy="14" r="11" fill="#111" stroke="#c92a2a" strokeWidth="1.500" /><circle cx="14" cy="14" r="5.500" stroke="#e03131" strokeWidth="2" /><path d="M14 6v5M18 14h4M9 18l3-3" stroke="#e03131" strokeWidth="2" /></TI></Slot>
    <Slot on><TI><path d="M19 2l7 3v18l-7 3-11-10-5 4-2-1V9l2-1 5 4z" fill="#8a5cc9" /><path d="M19 8v12l-7-6z" fill="#1c2023" /><path d="M19 2l7 3v18l-7 3z" fill="#b98ee8" /><path d="M1 11l4 3-4 3z" fill="#1c2023" /></TI></Slot>
    <div className="ml-[2px] w-[48px] h-[40px] bg-[#4a4d4e] border-b-[2px] border-[#a6f0d8] flex items-center justify-center">
      <TI><rect x="16" y="3" width="8" height="22" rx="1" fill="#d9a514" /><rect x="10" y="9" width="8" height="16" rx="1" fill="#f2c811" /><rect x="4" y="14" width="8" height="11" rx="1" fill="#f8e08e" /></TI>
    </div>
    <div className="ml-auto w-[416px] flex items-center text-[#e8e8e8] text-[12.500px]">
      <div className="relative w-[28px] h-[24px]">
        <svg width="28" height="24" viewBox="0 0 28 24"><ellipse cx="14" cy="18" rx="13" ry="5" fill="#b7d8f6" /><circle cx="11" cy="13" r="7" fill="#8fc1ee" /><circle cx="18" cy="14" r="6" fill="#cfe4f9" /></svg>
        <div className="absolute top-[-2px] right-[1px] w-[12px] h-[12px] rounded-full bg-[#d13127] text-white text-[8px] font-bold flex items-center justify-center">1</div>
      </div>
      <span className="ml-[6px] w-[29px] whitespace-nowrap">21°C</span>
      <span className="ml-[10px] w-[52px] whitespace-nowrap font-['DejaVu_Sans',sans-serif] text-[14px]" dir="rtl">غائم غالبًا</span>
      <ChevronUp className="ml-[22px]" size={16} strokeWidth={1.200} />
      <Video className="ml-[8px]" size={15} strokeWidth={1} />
      <svg className="ml-[9px]" width="16" height="12" viewBox="0 0 16 12" fill="none" stroke="#e8e8e8"><rect x="5.500" y="1.500" width="10" height="9" /><path d="M0 4h3M0 8h3M3 2.500h2v7H3z" /></svg>
      <Globe className="ml-[8px]" size={16} strokeWidth={1} />
      <Volume1 className="ml-[7px]" size={17} strokeWidth={1} />
      <span className="ml-[10px] w-[24px] text-[11.500px]">ENG</span>
      <div className="ml-[13px] w-[66px] text-center text-[11.500px] leading-[18px]"><div>3:21 PM</div><div className="whitespace-nowrap">12/26/2023</div></div>
      <div className="relative ml-[13px] w-[20px] h-[20px]">
        <svg width="16" height="14" viewBox="0 0 16 14" fill="#fff"><path d="M0 0h16v10H6l-3 3v-3H0z" /></svg>
        <div className="absolute right-[-3px] bottom-[-4px] w-[15px] h-[15px] rounded-full bg-[#3a3d40] border border-[#999] text-white text-[10px] font-bold flex items-center justify-center">1</div>
      </div>
    </div>
  </div>
);

export default function App() {
  return (
    <div className="w-[1920px] h-[1080px] flex flex-col overflow-hidden bg-white font-['Open_Sans',sans-serif]">
      <TitleBar />
      <Ribbon />
      <div className="h-[855px] flex shrink-0">
        <Rail />
        <div className="flex-1 flex flex-col min-w-0">
          <div className="h-[820px] bg-white shrink-0"><Report /></div>
          <Tabs />
        </div>
        <Viz />
        <DataPane />
      </div>
      <StatusBar />
      <Taskbar />
    </div>
  );
}
